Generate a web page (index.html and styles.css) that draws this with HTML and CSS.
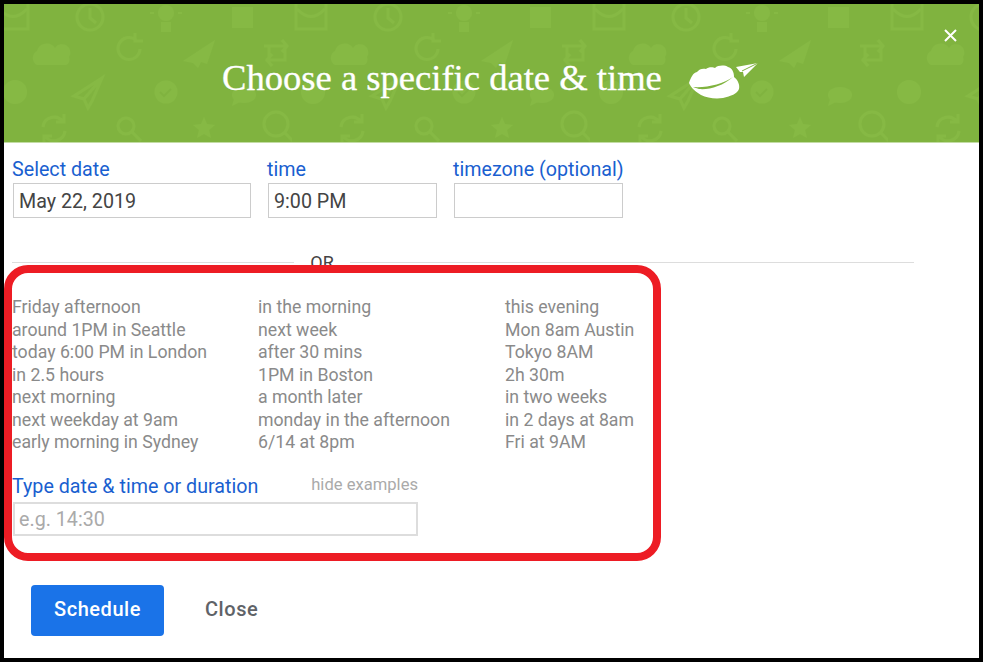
FILE: index.html
```html
<!DOCTYPE html>
<html lang="en">
<head>
    <meta charset="UTF-8">
    <meta name="viewport" content="width=device-width, initial-scale=1.0">
    <title>Choose a specific date &amp; time</title>
    <link rel="stylesheet" href="styles.css">
</head>
<body>
    <div class="dialog">
        <div class="banner">
            <svg class="banner-bg" width="975" height="138">
                <defs>
                    <pattern id="icons" x="-10" y="0" width="298" height="138" patternUnits="userSpaceOnUse">
                        <g fill="none" stroke="#86b944" stroke-width="3">
                            <!-- row 1 -->
                            <rect x="4" y="-3" width="30" height="28"/>
                            <path d="M5 5 Q19 20 33 5"/>
                            <circle cx="96" cy="13" r="13"/>
                            <path d="M96 4v10l6 5"/>
                            <!-- row 2 -->
                            <path d="M146 45a11 11 0 1 1-4-9M141 29v8h8"/>
                            <path d="M275 42h16v14h-16zM270 42h4M288 36l5 6-5 6M278 62l-5-6 5-6"/>
                            <!-- row 3 -->
                            <path d="M108 74 80 92l10 3 4 9 4-7zM108 74 90 95"/>
                            <!-- row 4 -->
                            <path d="M49 123a11 11 0 0 1 20-5M71 127a11 11 0 0 1-20 5M70 110v8h-8M50 140v-8h8"/>
                            <circle cx="132" cy="122" r="8"/>
                            <path d="M138 128l9 9"/>
                            <circle cx="282" cy="120" r="12"/>
                            <path d="M291 129l8 8"/>
                        </g>
                        <g fill="#86b944">
                            <circle cx="172" cy="9" r="8"/>
                            <rect x="167" y="18" width="10" height="10"/>
                            <rect x="156" y="8" width="4" height="2"/>
                            <rect x="184" y="8" width="4" height="2"/>
                            <rect x="238" y="3" width="21" height="21"/>
                            <path d="M43 61a8 8 0 0 1 0-14 10 10 0 0 1 18-3 8 8 0 0 1 14 9 6 6 0 0 1-3 8z"/>
                            <path d="M221 36 189 57l10 2 5 5 3-6 6 2zM221 36"/>
                            <circle cx="21" cy="88" r="12"/>
                            <circle cx="172" cy="88" r="11.5"/>
                            <ellipse cx="250" cy="91" rx="12" ry="8"/>
                            <path d="M240 95l-2 7 8-4z"/>
                            <path d="M210 113l3 7 8 1-6 5 2 8-7-4-7 4 2-8-6-5 8-1z"/>
                        </g>
                        <path d="M166 88l4 4 7-7" fill="none" stroke="#80b33f" stroke-width="2"/>
                    </pattern>
                </defs>
                <rect width="975" height="138" fill="url(#icons)"/>
            </svg>
            <h1 class="banner-title">Choose a specific date &amp; time</h1>
            <svg class="banner-logo" viewBox="40 20 80 45" width="80" height="45">
                <path d="M48 44C50 38 52 34 56 33 58 30 62 29 65 30 67 28 72 28 74 29 77 26 84 26 87 28 91 29 93 33 93 38 97 41 99 46 98 50 96 55 90 57 82 59 74 60 66 59 60 56 55 53 50 49 48 44z" fill="#fff"/>
                <path d="M52 48C66 49 82 45 92 38 82 47 68 51 58 50z" fill="#80b33f"/>
                <path d="M95 28 117 24 103 38 102 33 99 33z" fill="#fff"/>
                <path d="M101 32 117 24" stroke="#80b33f" stroke-width="1"/>
            </svg>
            <svg class="banner-close" viewBox="0 0 13 13" width="13" height="13">
                <path d="M1 1l11 11M12 1 1 12" stroke="#fff" stroke-width="2"/>
            </svg>
        </div>

        <div class="fields">
            <div class="field field-date">
                <label class="field-label">Select date</label>
                <input class="text-input" type="text" value="May 22, 2019">
            </div>
            <div class="field field-time">
                <label class="field-label">time</label>
                <input class="text-input" type="text" value="9:00 PM">
            </div>
            <div class="field field-zone">
                <label class="field-label">timezone (optional)</label>
                <input class="text-input" type="text">
            </div>
        </div>

        <div class="or-row">
            <span class="or-line or-line-left"></span>
            <span class="or-text">OR</span>
            <span class="or-line"></span>
        </div>

        <div class="highlight">
            <div class="examples">
                <div>Friday afternoon</div>
                <div>in the morning</div>
                <div>this evening</div>
                <div>around 1PM in Seattle</div>
                <div>next week</div>
                <div>Mon 8am Austin</div>
                <div>today 6:00 PM in London</div>
                <div>after 30 mins</div>
                <div>Tokyo 8AM</div>
                <div>in 2.5 hours</div>
                <div>1PM in Boston</div>
                <div>2h 30m</div>
                <div>next morning</div>
                <div>a month later</div>
                <div>in two weeks</div>
                <div>next weekday at 9am</div>
                <div>monday in the afternoon</div>
                <div>in 2 days at 8am</div>
                <div>early morning in Sydney</div>
                <div>6/14 at 8pm</div>
                <div>Fri at 9AM</div>
            </div>
            <div class="type-head">
                <label class="field-label">Type date &amp; time or duration</label>
                <span class="hide-link">hide examples</span>
            </div>
            <input class="text-input type-input" type="text" placeholder="e.g. 14:30">
        </div>

        <div class="actions">
            <button class="btn btn-primary">Schedule</button>
            <button class="btn btn-plain">Close</button>
        </div>
    </div>
</body>
</html>
```

FILE: styles.css
```css
* {
    box-sizing: border-box;
}
body {
    margin: 0;
    font-family: Roboto, Arial, sans-serif;
    background: #fff;
}
.dialog {
    width: 983px;
    height: 662px;
    border: 4px solid #000;
    background: #fff;
    overflow: hidden;
}

/* green header */
.banner {
    position: relative;
    display: flex;
    align-items: center;
    height: 139px;
    padding: 10px 0 0 218px;
    background: #80b33f;
    border-bottom: 1px solid #c3dca4;
}
.banner-bg {
    position: absolute;
    left: 0;
    top: 0;
}
.banner-title {
    position: relative;
    margin: 0;
    font-family: "Liberation Serif", "Times New Roman", serif;
    font-size: 36.6px;
    font-weight: normal;
    line-height: 44px;
    color: #fff;
    white-space: nowrap;
    -webkit-text-stroke: 0.3px #fff;
}
.banner-logo {
    position: relative;
    margin-left: 19px;
    margin-top: 7px;
}
.banner-close {
    position: absolute;
    top: 25px;
    right: 22px;
}

/* date, time, timezone */
.fields {
    display: flex;
    padding: 13px 0 0 8px;
}
.field {
    display: flex;
    flex-direction: column;
}
.field-date {
    width: 255px;
}
.field-time {
    width: 186px;
}
.field-label {
    font-size: 19.7px;
    line-height: 27px;
    color: #1a5fd0;
    white-space: nowrap;
}
.text-input {
    display: block;
    height: 35px;
    margin: 0 0 0 1px;
    padding: 1px 5px 0;
    border: 1px solid #ccc;
    font-family: Roboto, Arial, sans-serif;
    font-size: 19.7px;
    color: #444;
    background: #fff;
    outline: none;
}
.field-date .text-input {
    width: 238px;
}
.field-time .text-input,
.field-zone .text-input {
    width: 169px;
}

/* OR divider */
.or-row {
    display: flex;
    align-items: center;
    height: 28px;
    margin: 30px 65px 0 8px;
}
.or-line {
    flex: 1;
    height: 1px;
    background: #ddd;
}
.or-line-left {
    flex: none;
    width: 282px;
}
.or-text {
    width: 56px;
    text-align: center;
    font-size: 18px;
    color: #444;
}

/* red highlight around the free text part */
.highlight {
    position: relative;
    width: 657px;
    height: 296px;
    margin-top: -11px;
    border: 8px solid #ed1c24;
    border-radius: 24px;
    background: #fff;
}
.examples {
    display: grid;
    grid-template-columns: 246px 247px auto;
    padding-top: 23px;
    font-size: 17.7px;
    line-height: 22.5px;
    color: #8a8a8a;
    white-space: nowrap;
}
.type-head {
    display: flex;
    align-items: flex-start;
    justify-content: space-between;
    width: 406px;
    margin-top: 19px;
}
.hide-link {
    font-size: 16.6px;
    line-height: 23px;
    color: #aaa;
}
.type-input {
    width: 405px;
    height: 34px;
    margin: 2px 0 0 1px;
    padding: 1px 4px 0;
    border-width: 2px;
    border-color: #ddd;
}
.type-input::placeholder {
    color: #aaa;
}

/* bottom buttons */
.actions {
    display: flex;
    align-items: center;
    gap: 41px;
    margin: 24px 0 0 27px;
}
.btn {
    border: none;
    font-family: Roboto, Arial, sans-serif;
    font-size: 20px;
    font-weight: 500;
    letter-spacing: 0.55px;
    cursor: pointer;
}
.btn-primary {
    width: 133px;
    height: 51px;
    padding: 0 0 3px;
    border-radius: 4px;
    background: #1a73e8;
    color: #fff;
}
.btn-plain {
    padding: 0 0 3px;
    background: none;
    color: #5f6368;
}
```
